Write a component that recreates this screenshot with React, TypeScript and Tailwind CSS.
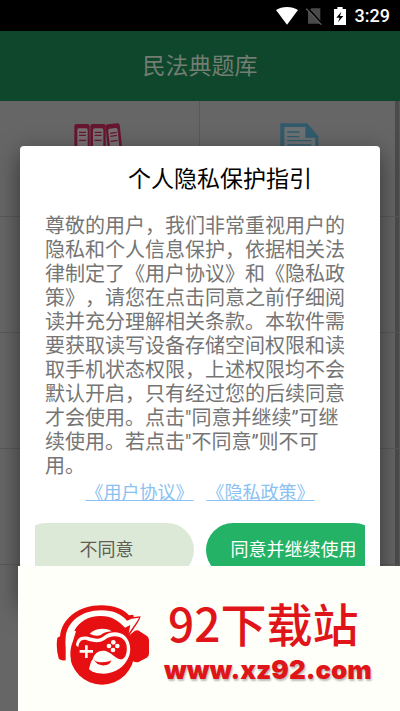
import type { ReactNode } from 'react'

const PRIVACY_TEXT =
  '尊敬的用户，我们非常重视用户的隐私和个人信息保护，依据相关法律制定了《用户协议》和《隐私政策》，请您在点击同意之前仔细阅读并充分理解相关条款。本软件需要获取读写设备存储空间权限和读取手机状态权限，上述权限均不会默认开启，只有经过您的后续同意才会使用。点击"同意并继续”可继续使用。若点击"不同意”则不可用。'

function StatusBar() {
  return (
    <div className="flex h-[31px] items-center justify-end bg-black pr-[10px] text-white">
      <svg className="mr-2 h-[18px] w-[22px]" viewBox="0 0 66 54" fill="currentColor">
        <path d="M0 9Q14 0 33 0t33 9L33 53z" />
      </svg>
      <svg className="mr-3 h-[18px] w-4" viewBox="0 0 48 54">
        <path d="M6 14 16 4H43V50H6z" fill="#4a4a4a" />
        <path d="M4 2 48 50" stroke="#000" strokeWidth="5" />
        <path d="M1 5 46 53" stroke="#5a5a5a" strokeWidth="4" />
      </svg>
      <svg className="mr-[9px] h-[18px] w-3" viewBox="0 0 36 54">
        <path d="M10 0H26V6H36V54H0V6H10z" fill="#fff" />
        <path d="M22 14 7 32H17L12 46 28 27H18z" fill="#000" />
      </svg>
      <span className="font-[Roboto,sans-serif] text-lg font-medium leading-5">3:29</span>
    </div>
  )
}

function BooksIcon() {
  return (
    <svg className="h-[50px] w-[51px]" viewBox="0 0 153 150">
      <g fill="#66172f">
        <rect x="1" y="3" width="46" height="140" rx="7" />
        <rect x="49" y="3" width="46" height="140" rx="7" />
        <rect x="101" y="2" width="43" height="140" rx="7" transform="rotate(-6 122 72)" />
      </g>
      <g fill="#777174">
        <rect x="10" y="16" width="31" height="60" rx="5" />
        <rect x="57" y="16" width="31" height="60" rx="5" />
        <rect x="108" y="16" width="28" height="60" rx="5" transform="rotate(-6 122 72)" />
      </g>
      <path
        d="M15 28h21M15 37h21M15 52h21M62 28h21M62 37h21M62 52h21M108 31l20-3M109 40l20-3M110 55l20-3"
        stroke="#66172f"
        strokeWidth="4"
      />
    </svg>
  )
}

function DocumentIcon() {
  return (
    <svg className="h-[50px] w-[39px]" viewBox="0 0 117 150">
      <path d="M1 1H82L115 40V149H1z" fill="#315b6d" />
      <path d="M13 12H76V44H106V138H13z" fill="#6c7173" />
      <path d="M22 27h36M22 41h36M22 53h72M22 66h72M22 79h72" stroke="#315b6d" strokeWidth="4" />
    </svg>
  )
}

function GridCell({ children }: { children?: ReactNode }) {
  return (
    <div className="flex h-[116px] justify-center border-b border-r border-[#595959] pt-[22px]">
      {children}
    </div>
  )
}

function SiteLogo() {
  return (
    <svg className="h-20 w-[94px] shrink-0" viewBox="50 72 282 240">
      {/* headphones */}
      <path d="M62 168C66 112 120 73 186 73C224 73 252 84 269 103L282 101 283 108 304 106C300 122 286 138 268 166L180 150 79 175z" fill="#e60f12" />
      <path d="M54 171Q56 167 79 162V238Q62 240 58 232Q49 200 54 171z" fill="#e60f12" />
      <path d="M266 166 287 149Q295 145 303 152L324 166Q329 170 329 178V218Q329 226 322 230L298 243Q290 246 280 240z" fill="#e60f12" />
      {/* head */}
      <circle cx="188" cy="214" r="97" fill="#e60f12" />
      {/* headband gap, ends in a lightning tip */}
      <path d="M79 168C84 122 126 88 186 88C222 88 246 99 263 119L277 113 299 110C294 121 280 139 268 157L273 132 257 140C238 119 216 105 184 105C146 105 119 123 105 149L110 151L101 180C93 198 91 219 95 240Q80 224 79 190z" fill="#fffffa" />
      {/* controller and face */}
      <path d="M151 158Q166 143 190 143Q209 143 217 151Q194 153 183 163Q166 167 151 158z" fill="#fffffa" />
      <path d="M110 193C111 173 124 163 145 167C164 172 180 178 193 166C210 151 240 149 257 165C272 180 277 205 269 226C258 256 227 278 194 278C171 278 155 272 149 264C153 251 153 243 160 235C165 215 181 206 199 210C214 214 228 231 242 235C252 237 260 228 262 211C265 189 256 173 240 168C223 163 207 168 199 175C181 189 158 183 143 178C127 173 119 182 117 199z" fill="#fffffa" />
      <path d="M161 232Q166 245 188 244Q211 243 216 237Q214 251 196 253Q171 255 161 232z" fill="#e60f12" />
      <path d="M141 193V231M121 211H161" stroke="#fffffa" strokeWidth="8" />
      <g fill="#fffffa">
        <circle cx="222" cy="184" r="7" />
        <circle cx="209" cy="195" r="7" />
        <circle cx="234" cy="195" r="7" />
        <circle cx="221" cy="207" r="7" />
      </g>
    </svg>
  )
}

function PrivacyDialog() {
  return (
    <div
      role="dialog"
      aria-labelledby="privacy-title"
      className="absolute inset-x-5 top-[146px] rounded-sm bg-white px-[15px] pb-6 pt-[18px] shadow-[0_8px_24px_rgba(0,0,0,0.5)]"
    >
      <h2 id="privacy-title" className="pl-10 text-center text-[23px] leading-8 text-black">
        个人隐私保护指引
      </h2>
      <p className="mt-[18px] pl-[10px] pr-5 text-xl leading-6 text-[#757575] [text-spacing-trim:space-all]">
        {PRIVACY_TEXT}
      </p>
      <div className="mt-[3px] flex justify-center gap-[13px] text-lg leading-6 text-[#8ac1f3] [text-spacing-trim:space-all]">
        <a href="#agreement" className="underline">《用户协议》</a>
        <a href="#privacy" className="underline">《隐私政策》</a>
      </div>
      <div className="mt-[18px] overflow-hidden">
        <div className="-mx-4 flex gap-3 text-lg">
          <button className="h-[54px] flex-1 rounded-[27px] bg-[#dce9d7] text-[#625c52]">不同意</button>
          <button className="h-[54px] flex-1 rounded-[27px] bg-[#24b266] text-white">同意并继续使用</button>
        </div>
      </div>
    </div>
  )
}

export default function App() {
  return (
    <div className="relative flex min-h-screen flex-col overflow-hidden bg-[#666] font-[Roboto,'Noto_Sans_CJK_SC',sans-serif]">
      <StatusBar />
      <header className="flex h-[70px] items-center justify-center bg-[#0e472c] pt-[2px]">
        <h1 className="text-[23px] leading-8 text-[#737d72]">民法典题库</h1>
      </header>
      <main className="grow border-r-[5px] border-[#4b4b49]">
        <div className="-mr-[5px] grid grid-cols-2">
          <GridCell>
            <BooksIcon />
          </GridCell>
          <GridCell>
            <DocumentIcon />
          </GridCell>
          <GridCell />
          <GridCell />
          <GridCell />
          <GridCell />
          <GridCell />
          <GridCell />
        </div>
      </main>

      <PrivacyDialog />

      {/* Download site banner */}
      <div className="absolute bottom-0 left-[18px] right-0 flex h-[145px] items-center gap-[14px] bg-[#fffffa] pl-[38px] pt-3 text-[#df1519]">
        <SiteLogo />
        <div className="flex flex-col pt-1">
          <span className="pl-1 font-['Noto_Sans_CJK_SC',sans-serif] text-[46px] font-medium leading-[46px]">92下载站</span>
          <span className="font-[Inter,sans-serif] text-[26px] font-black leading-[50px] [text-shadow:1px_2px_2px_#bbb]">
            www.xz92.com
          </span>
        </div>
      </div>
    </div>
  )
}
